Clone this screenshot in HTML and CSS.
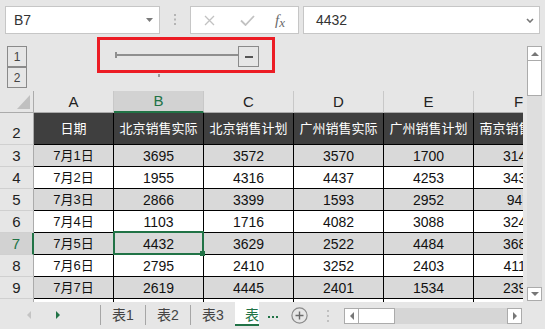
FILE: index.html
```html
<!DOCTYPE html>
<html lang="zh-CN">
  <head>
    <meta charset="UTF-8">
    <meta name="viewport" content="width=device-width, initial-scale=1.0">
    <title>销售数据</title>
    <link rel="stylesheet" href="styles.css">
  </head>
  <body>
    <div class="formula-bar">
      <div class="name-box">
        <span>B7</span>
        <svg width="7" height="4" viewBox="0 0 7 4"><path d="M0 0h7L3.5 4z" fill="#7a7a7a"/></svg>
      </div>
      <svg class="grip" width="2" height="11" viewBox="0 0 2 11"><rect y="0" width="2" height="2"/><rect y="4.5" width="2" height="2"/><rect y="9" width="2" height="2"/></svg>
      <div class="fx-buttons">
        <svg width="11" height="11" viewBox="0 0 11 11"><path d="M1 1L10 10M10 1L1 10" stroke="#c2c2c2" stroke-width="1.3" fill="none"/></svg>
        <svg class="confirm" width="15" height="11" viewBox="0 0 15 11"><path d="M1 5.5L5.5 10L14 1" stroke="#c2c2c2" stroke-width="1.8" fill="none"/></svg>
        <span class="fx">f<span class="fx-x">x</span></span>
      </div>
      <div class="formula-input">
        <span>4432</span>
        <svg width="8" height="5" viewBox="0 0 8 5"><path d="M1 1L4 4L7 1" stroke="#777" stroke-width="1.6" fill="none"/></svg>
      </div>
    </div>

    <div class="workspace">
      <div class="sheet">
        <div class="outline">
          <div class="levels">
            <div class="level">1</div>
            <div class="level">2</div>
          </div>
          <div class="group">
            <div class="group-box">
              <div class="group-line"></div>
              <div class="collapse"><span class="minus"></span></div>
            </div>
            <div class="group-tick"></div>
          </div>
        </div>

        <table class="grid">
          <colgroup>
            <col class="c-row"><col class="c-a"><col class="c-n"><col class="c-n"><col class="c-n"><col class="c-n"><col class="c-n">
          </colgroup>
          <tr class="head">
            <th class="corner"><svg width="13" height="14" viewBox="0 0 13 14"><path d="M13 0V14H0z" fill="#c0c0c0"/></svg></th>
            <th class="col">A</th>
            <th class="col active">B</th>
            <th class="col">C</th>
            <th class="col">D</th>
            <th class="col">E</th>
            <th class="col">F</th>
          </tr>
          <tr class="title">
            <th class="row title-num">2</th>
            <th class="title-cell">日期</th>
            <th class="title-cell">北京销售实际</th>
            <th class="title-cell">北京销售计划</th>
            <th class="title-cell">广州销售实际</th>
            <th class="title-cell">广州销售计划</th>
            <th class="title-cell">南京销售实际</th>
          </tr>
          <tr class="shade">
            <th class="row">3</th>
            <td>7月1日</td><td class="num">3695</td><td class="num">3572</td><td class="num">3570</td><td class="num">1700</td><td class="num">3145</td>
          </tr>
          <tr>
            <th class="row">4</th>
            <td>7月2日</td><td class="num">1955</td><td class="num">4316</td><td class="num">4437</td><td class="num">4253</td><td class="num">3431</td>
          </tr>
          <tr class="shade">
            <th class="row">5</th>
            <td>7月3日</td><td class="num">2866</td><td class="num">3399</td><td class="num">1593</td><td class="num">2952</td><td class="num">947</td>
          </tr>
          <tr>
            <th class="row">6</th>
            <td>7月4日</td><td class="num">1103</td><td class="num">1716</td><td class="num">4082</td><td class="num">3088</td><td class="num">3240</td>
          </tr>
          <tr class="shade">
            <th class="row active">7</th>
            <td>7月5日</td><td class="num selected">4432</td><td class="num">3629</td><td class="num">2522</td><td class="num">4484</td><td class="num">3682</td>
          </tr>
          <tr>
            <th class="row">8</th>
            <td>7月6日</td><td class="num">2795</td><td class="num">2410</td><td class="num">3252</td><td class="num">2403</td><td class="num">4115</td>
          </tr>
          <tr class="shade">
            <th class="row">9</th>
            <td>7月7日</td><td class="num">2619</td><td class="num">4445</td><td class="num">2401</td><td class="num">1534</td><td class="num">2398</td>
          </tr>
          <tr>
            <th class="row">10</th>
            <td></td><td></td><td></td><td></td><td></td><td></td>
          </tr>
        </table>
      </div>

      <div class="vscroll">
        <div class="vs-btn"><svg width="8" height="4" viewBox="0 0 8 4"><path d="M0 4h8L4 0z" fill="#777"/></svg></div>
        <div class="vs-thumb"></div>
        <div class="vs-track"></div>
        <div class="vs-btn down"><svg width="8" height="4" viewBox="0 0 8 4"><path d="M0 0h8L4 4z" fill="#777"/></svg></div>
      </div>
    </div>

    <div class="tabbar">
      <div class="tab-nav">
        <svg width="4" height="8" viewBox="0 0 4 8"><path d="M4 0V8L0 4z" fill="#c4c4c4"/></svg>
        <svg class="next" width="4" height="8" viewBox="0 0 4 8"><path d="M0 0V8L4 4z" fill="#217346"/></svg>
      </div>
      <span class="sep"></span>
      <div class="tab">表1</div>
      <span class="sep"></span>
      <div class="tab">表2</div>
      <span class="sep"></span>
      <div class="tab">表3</div>
      <div class="tab active">表4</div>
      <svg class="more" width="10" height="2" viewBox="0 0 10 2"><rect x="0" width="2" height="2"/><rect x="4" width="2" height="2"/><rect x="8" width="2" height="2"/></svg>
      <svg class="add" width="17" height="17" viewBox="0 0 17 17"><circle cx="8.5" cy="8.5" r="7.6" stroke="#8a8a8a" stroke-width="1.2" fill="none"/><path d="M8.5 4.5v8M4.5 8.5h8" stroke="#6a6a6a" stroke-width="1.4"/></svg>
      <svg class="tab-grip" width="2" height="12" viewBox="0 0 2 12"><rect y="0" width="2" height="2"/><rect y="5" width="2" height="2"/><rect y="10" width="2" height="2"/></svg>
      <div class="hscroll">
        <div class="hs-btn"><svg width="4" height="8" viewBox="0 0 4 8"><path d="M4 0V8L0 4z" fill="#777"/></svg></div>
        <div class="hs-thumb"></div>
        <div class="hs-track"></div>
        <div class="hs-btn"><svg width="4" height="8" viewBox="0 0 4 8"><path d="M0 0V8L4 4z" fill="#777"/></svg></div>
      </div>
    </div>
  </body>
</html>
```

FILE: styles.css
```css
* {
  box-sizing: border-box;
}
html, body {
  margin: 0;
  padding: 0;
}
body {
  width: 545px;
  height: 329px;
  overflow: hidden;
  background-color: #e6e6e6;
  font-family: "Liberation Sans", "Noto Sans CJK SC", sans-serif;
  color: #222;
}

/* строка формул */
.formula-bar {
  display: flex;
  align-items: flex-start;
  height: 37px;
  padding-top: 6px;
}
.name-box {
  display: flex;
  align-items: center;
  justify-content: space-between;
  width: 155px;
  height: 28px;
  margin-left: 5px;
  padding: 0 6px 0 8px;
  background: #fff;
  border: 1px solid #c6c6c6;
  font-size: 14px;
  color: #333;
}
.grip {
  margin: 8px 0 0 14px;
  fill: #b4b4b4;
}
.fx-buttons {
  display: flex;
  align-items: center;
  width: 109px;
  height: 28px;
  margin-left: 14px;
  padding-left: 13px;
  background: #fff;
  border: 1px solid #c6c6c6;
}
.confirm {
  margin-left: 25px;
}
.fx {
  margin-left: 20px;
  font-family: "Liberation Serif", serif;
  font-style: italic;
  font-size: 15px;
  color: #6a6a6a;
}
.fx-x {
  position: relative;
  top: 2px;
  font-size: 13px;
}
.formula-input {
  display: flex;
  align-items: center;
  justify-content: space-between;
  width: 237px;
  height: 28px;
  margin-left: 4px;
  padding: 0 5px 0 12px;
  background: #fff;
  border: 1px solid #c6c6c6;
  font-size: 14px;
  color: #333;
}

/* лист */
.workspace {
  display: flex;
  height: 265px;
}
.sheet {
  width: 523px;
  height: 265px;
  overflow: hidden;
  flex-shrink: 0;
}
.outline {
  display: flex;
  height: 54px;
}
.levels {
  padding: 9px 0 0 7px;
  width: 27px;
  flex-shrink: 0;
}
.level {
  display: flex;
  align-items: center;
  justify-content: center;
  width: 20px;
  height: 21px;
  border: 1px solid #8a8a8a;
  font-size: 12px;
  color: #444;
}
.group {
  display: flex;
  flex-direction: column;
  align-items: flex-start;
  margin-left: 70px;
}
.group-box {
  display: flex;
  align-items: flex-start;
  width: 178px;
  height: 36px;
  padding: 0 13px 0 15px;
  border: 3px solid #ec1c24;
}
.group-line {
  flex: 1;
  height: 6px;
  margin-top: 12px;
  border-left: 2px solid #8f8f8f;
  background: linear-gradient(#8f8f8f, #8f8f8f) 0 2px / 100% 2px no-repeat;
}
.collapse {
  display: flex;
  align-items: center;
  justify-content: center;
  width: 21px;
  height: 21px;
  margin-top: 6px;
  border: 1px solid #8a8a8a;
}
.minus {
  width: 8px;
  height: 2px;
  background: #555;
}
.group-tick {
  width: 2px;
  height: 3px;
  margin: 1px 0 0 61px;
  background: #9a9a9a;
}

.grid {
  border-collapse: separate;
  border-spacing: 0;
  table-layout: fixed;
  width: 564px;
  font-size: 13px;
}
.c-row { width: 34px; }
.c-a { width: 80px; }
.c-n { width: 90px; }
.grid th, .grid td {
  padding: 0;
  text-align: center;
  vertical-align: middle;
  white-space: nowrap;
  overflow: hidden;
  font-weight: normal;
  line-height: 16px;
}
.grid tr {
  height: 22px;
}
.grid tr.title {
  height: 32px;
}
.corner {
  vertical-align: bottom !important;
  padding: 0 3px 3px 0 !important;
  border-right: 1px solid #ababab;
  border-bottom: 1px solid #ababab;
}
.corner svg {
  display: block;
  margin-left: auto;
}
.col {
  font-size: 15px;
  color: #222;
  border-right: 1px solid #c8c8c8;
  border-bottom: 1px solid #ababab;
}
.col.active {
  background: #d2d2d2;
  color: #217346;
  border-bottom: 2px solid #217346;
}
.row {
  font-size: 15px;
  color: #222;
  background: #e6e6e6;
  border-right: 1px solid #ababab;
  border-bottom: 1px solid #d0d0d0;
}
.row.active {
  background: #d2d2d2;
  color: #217346;
  border-right: 2px solid #217346;
}
.grid th.title-num {
  vertical-align: bottom;
  padding-bottom: 3px;
}
.title-cell {
  background: #3f3f3f;
  color: #fff;
  border-right: 1px solid #000;
  border-bottom: 1px solid #000;
}
.grid td {
  background: #fff;
  color: #111;
  border-right: 1px solid #000;
  border-bottom: 1px solid #000;
}
.grid tr.shade td {
  background: #d9d9d9;
}
.grid td.num {
  font-size: 14px;
}
.grid td.selected {
  position: relative;
  overflow: visible;
}
.selected::before {
  content: "";
  position: absolute;
  top: -2px;
  left: -1px;
  right: -1px;
  bottom: -1px;
  border: 2px solid #217346;
  z-index: 2;
}
.selected::after {
  content: "";
  position: absolute;
  right: -2px;
  bottom: -2px;
  width: 5px;
  height: 5px;
  background: #217346;
  z-index: 3;
}

/* полосы прокрутки */
.vscroll {
  display: flex;
  flex-direction: column;
  width: 15px;
  height: 255px;
  margin: 9px 0 0 4px;
}
.vs-btn {
  display: flex;
  align-items: center;
  justify-content: center;
  height: 15px;
  background: #fff;
  border: 1px solid #ababab;
}
.vs-btn.down {
  height: 14px;
}
.vs-thumb {
  height: 35px;
  background: #fff;
  border: 1px solid #ababab;
  border-top: none;
}
.vs-track {
  flex: 1;
  background: #dedede;
}

/* вкладки */
.tabbar {
  display: flex;
  align-items: flex-start;
  height: 27px;
}
.tab-nav {
  display: flex;
  align-items: center;
  width: 100px;
  height: 25px;
  padding-left: 27px;
  flex-shrink: 0;
}
.tab-nav .next {
  margin-left: 25px;
}
.sep {
  width: 1px;
  height: 20px;
  margin-top: 3px;
  background: #a6a6a6;
  flex-shrink: 0;
}
.tab {
  display: flex;
  align-items: center;
  justify-content: center;
  width: 44px;
  height: 23px;
  font-size: 14px;
  color: #444;
  flex-shrink: 0;
}
.tab.active {
  justify-content: flex-start;
  width: 24px;
  height: 24px;
  padding: 1px 0 0 10px;
  overflow: hidden;
  white-space: nowrap;
  background: #fff;
  color: #217346;
  border-bottom: 2px solid #217346;
}
.more {
  margin: 14px 0 0 9px;
  fill: #217346;
  flex-shrink: 0;
}
.add {
  margin: 5px 0 0 13px;
  flex-shrink: 0;
}
.tab-grip {
  margin: 8px 0 0 19px;
  fill: #c0c0c0;
  flex-shrink: 0;
}
.hscroll {
  display: flex;
  width: 178px;
  height: 16px;
  margin: 6px 0 0 15px;
  flex-shrink: 0;
}
.hs-btn {
  display: flex;
  align-items: center;
  justify-content: center;
  width: 15px;
  background: #fff;
  border: 1px solid #ababab;
}
.hs-thumb {
  width: 36px;
  background: #fff;
  border: 1px solid #ababab;
  border-left: none;
}
.hs-track {
  flex: 1;
  background: #d6d6d6;
}
```
